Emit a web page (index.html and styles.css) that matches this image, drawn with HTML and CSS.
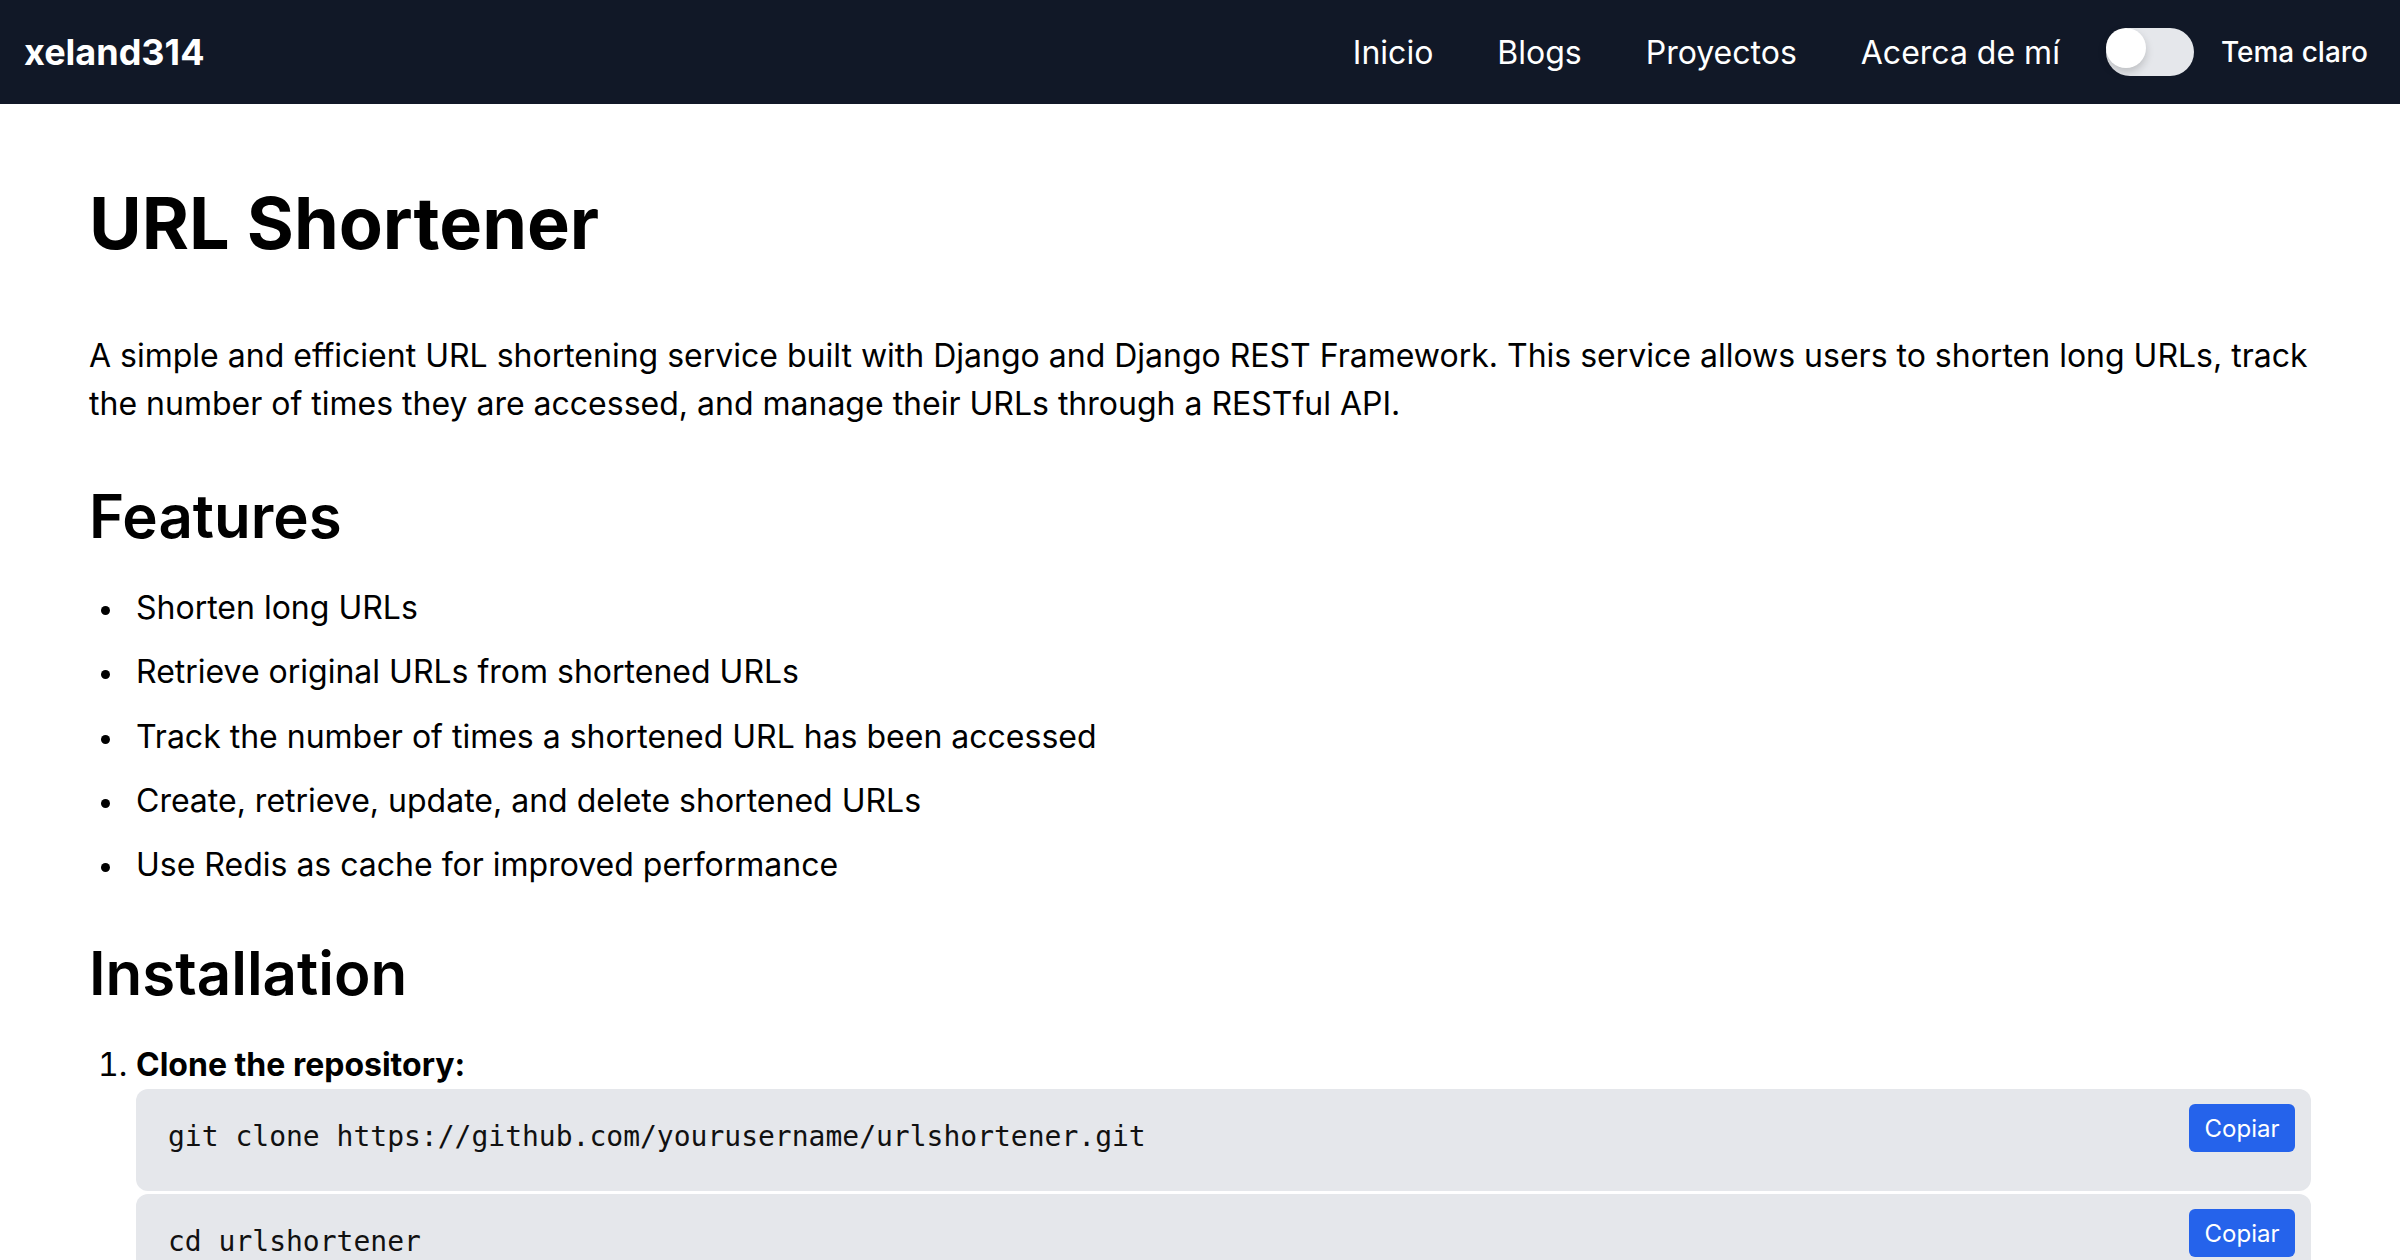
FILE: index.html
```html
<!DOCTYPE html>
<html lang="es">
<head>
<meta charset="utf-8">
<title>URL Shortener - xeland314</title>
<link rel="stylesheet" href="styles.css">
</head>
<body>
<nav class="nav">
  <a class="brand" href="#">xeland314</a>
  <div class="nav-right">
    <ul class="links">
      <li><a href="#">Inicio</a></li>
      <li><a href="#">Blogs</a></li>
      <li><a href="#">Proyectos</a></li>
      <li><a href="#">Acerca de mí</a></li>
    </ul>
    <div class="theme">
      <span class="toggle"><span class="knob"></span></span>
      <span class="theme-label">Tema claro</span>
    </div>
  </div>
</nav>
<main class="content">
  <h1>URL Shortener</h1>
  <p>A simple and efficient URL shortening service built with Django and Django REST Framework. This service allows users to shorten long URLs, track the number of times they are accessed, and manage their URLs through a RESTful API.</p>
  <h2 class="h-features">Features</h2>
  <ul class="features">
    <li>Shorten long URLs</li>
    <li>Retrieve original URLs from shortened URLs</li>
    <li>Track the number of times a shortened URL has been accessed</li>
    <li>Create, retrieve, update, and delete shortened URLs</li>
    <li>Use Redis as cache for improved performance</li>
  </ul>
  <h2 class="h-install">Installation</h2>
  <ol class="steps">
    <li><strong>Clone the repository:</strong>
      <div class="code"><pre><code>git clone https://github.com/yourusername/urlshortener.git</code></pre><button class="copy">Copiar</button></div>
      <div class="code"><pre><code>cd urlshortener</code></pre><button class="copy">Copiar</button></div>
    </li>
  </ol>
</main>
</body>
</html>
```

FILE: styles.css
```css
* { box-sizing: border-box; }
html, body { margin: 0; padding: 0; background: #ffffff; }
body {
  font-family: Inter, "Noto Sans", sans-serif;
  color: #000000;
}
a { color: inherit; text-decoration: none; }

.nav {
  height: 104px;
  background: #111827;
  display: flex;
  align-items: center;
  justify-content: space-between;
  padding: 0 32px 0 24px;
  color: #ffffff;
}
.brand {
  font-size: 36px;
  font-weight: 700;
}
.nav-right {
  display: flex;
  align-items: center;
}
.links {
  list-style: none;
  margin: 0;
  padding: 0;
  display: flex;
  gap: 64px;
  font-size: 32px;
}
.theme {
  display: flex;
  align-items: center;
  margin-left: 46px;
  gap: 27px;
}
.toggle {
  position: relative;
  display: block;
  width: 88px;
  height: 48px;
  border-radius: 24px;
  background: #e5e7eb;
}
.knob {
  position: absolute;
  left: 0;
  top: 0;
  width: 40px;
  height: 40px;
  border-radius: 50%;
  background: #ffffff;
  box-shadow: 0 4px 8px rgba(0,0,0,0.18);
}
.theme-label {
  font-size: 28px;
  font-weight: 500;
}

.content {
  padding: 0 89px 40px 89px;
}
h1 {
  font-size: 72px;
  line-height: 86px;
  font-weight: 700;
  margin: 76px 0 0 0;
}
p {
  font-size: 32px;
  line-height: 48px;
  margin: 66px 0 0 0;
}
h2 {
  font-size: 60px;
  line-height: 72px;
  font-weight: 600;
  margin: 0;
}
.h-features { margin-top: 52px; }
.h-install { margin-top: 48px; }
.features {
  list-style: none;
  font-size: 32px;
  line-height: 48px;
  margin: 32px 0 0 0;
  padding-left: 47px;
}
.features li { position: relative; }
.features li::before {
  content: "";
  position: absolute;
  left: -35px;
  top: 22px;
  width: 9px;
  height: 9px;
  border-radius: 50%;
  background: #000000;
}
.features li + li { margin-top: 16.3px; }
.steps {
  font-size: 32px;
  line-height: 48px;
  margin: 32px 0 0 0;
  padding-left: 47px;
}
.steps strong { font-weight: 700; }
.code {
  position: relative;
  background: #e5e7eb;
  border-radius: 12px;
  margin-bottom: 3px;
}
.code pre {
  margin: 0;
  padding: 27px 32px 33px 32px;
  font-family: "DejaVu Sans Mono", "Liberation Mono", monospace;
  font-size: 28px;
  line-height: 42px;
  color: #111111;
}
.copy {
  position: absolute;
  top: 15px;
  right: 16px;
  width: 106px;
  height: 48px;
  border: 0;
  border-radius: 6px;
  background: #2563eb;
  color: #ffffff;
  font-family: Inter, "Noto Sans", sans-serif;
  font-size: 24px;
  padding: 0;
}
```
